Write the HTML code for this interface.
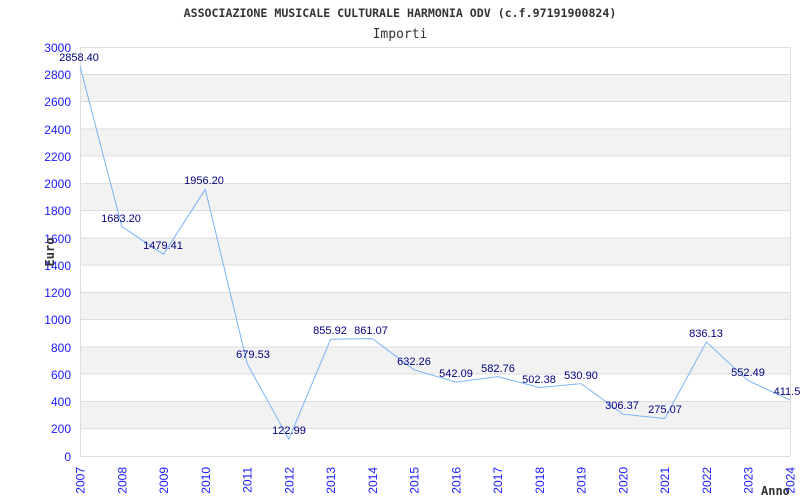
<!DOCTYPE html>
<html><head><meta charset="utf-8"><style>html,body{margin:0;padding:0;background:#fff}svg{display:block}</style></head>
<body>
<svg width="800" height="500" xmlns="http://www.w3.org/2000/svg">
<rect width="800" height="500" fill="#fff"/>
<text x="400" y="17" text-anchor="middle" font-family="DejaVu Sans Mono, Liberation Mono, monospace" font-size="11.6" font-weight="bold" fill="#333">ASSOCIAZIONE MUSICALE CULTURALE HARMONIA ODV (c.f.97191900824)</text>
<text x="400" y="38" text-anchor="middle" font-family="DejaVu Sans Mono, Liberation Mono, monospace" font-size="13" fill="#333">Importi</text>
<g fill="#f2f2f2">
<rect x="80" y="74.3" width="710" height="27.3"/>
<rect x="80" y="128.8" width="710" height="27.3"/>
<rect x="80" y="183.3" width="710" height="27.3"/>
<rect x="80" y="237.9" width="710" height="27.3"/>
<rect x="80" y="292.4" width="710" height="27.3"/>
<rect x="80" y="346.9" width="710" height="27.3"/>
<rect x="80" y="401.5" width="710" height="27.3"/>
</g>
<g stroke="#ddd" stroke-width="1">
<line x1="80" y1="47.5" x2="790" y2="47.5"/>
<line x1="80" y1="74.5" x2="790" y2="74.5"/>
<line x1="80" y1="101.5" x2="790" y2="101.5"/>
<line x1="80" y1="129" x2="790" y2="129"/>
<line x1="80" y1="156" x2="790" y2="156"/>
<line x1="80" y1="183.5" x2="790" y2="183.5"/>
<line x1="80" y1="210.5" x2="790" y2="210.5"/>
<line x1="80" y1="238" x2="790" y2="238"/>
<line x1="80" y1="265" x2="790" y2="265"/>
<line x1="80" y1="292.5" x2="790" y2="292.5"/>
<line x1="80" y1="319.5" x2="790" y2="319.5"/>
<line x1="80" y1="347" x2="790" y2="347"/>
<line x1="80" y1="374" x2="790" y2="374"/>
<line x1="80" y1="401.5" x2="790" y2="401.5"/>
<line x1="80" y1="428.5" x2="790" y2="428.5"/>
<line x1="80.5" y1="47" x2="80.5" y2="456"/>
<line x1="790.5" y1="47" x2="790.5" y2="456"/>
<line x1="80" y1="456.5" x2="790" y2="456.5"/>
</g>
<g font-family="Liberation Sans, sans-serif" font-size="12" fill="#1a1aff" text-anchor="end">
<text x="71" y="52">3000</text><text x="71" y="79">2800</text><text x="71" y="106">2600</text><text x="71" y="134">2400</text><text x="71" y="161">2200</text><text x="71" y="188">2000</text><text x="71" y="215">1800</text><text x="71" y="243">1600</text><text x="71" y="270">1400</text><text x="71" y="297">1200</text><text x="71" y="324">1000</text><text x="71" y="352">800</text><text x="71" y="379">600</text><text x="71" y="406">400</text><text x="71" y="433">200</text><text x="71" y="461">0</text>
</g>
<g font-family="Liberation Sans, sans-serif" font-size="12" fill="#1a1aff" text-anchor="end">
<text transform="translate(84.5,467) rotate(-90)">2007</text>
<text transform="translate(126.3,467) rotate(-90)">2008</text>
<text transform="translate(168,467) rotate(-90)">2009</text>
<text transform="translate(209.8,467) rotate(-90)">2010</text>
<text transform="translate(251.6,467) rotate(-90)">2011</text>
<text transform="translate(293.3,467) rotate(-90)">2012</text>
<text transform="translate(335.1,467) rotate(-90)">2013</text>
<text transform="translate(376.8,467) rotate(-90)">2014</text>
<text transform="translate(418.6,467) rotate(-90)">2015</text>
<text transform="translate(460.4,467) rotate(-90)">2016</text>
<text transform="translate(502.1,467) rotate(-90)">2017</text>
<text transform="translate(543.9,467) rotate(-90)">2018</text>
<text transform="translate(585.6,467) rotate(-90)">2019</text>
<text transform="translate(627.4,467) rotate(-90)">2020</text>
<text transform="translate(669.2,467) rotate(-90)">2021</text>
<text transform="translate(710.9,467) rotate(-90)">2022</text>
<text transform="translate(752.7,467) rotate(-90)">2023</text>
<text transform="translate(794.5,467) rotate(-90)">2024</text>
</g>
<text transform="translate(54,252) rotate(-90)" text-anchor="middle" font-family="DejaVu Sans Mono, monospace" font-size="12" font-weight="bold" fill="#333">Euro</text>
<text x="761" y="495" font-family="DejaVu Sans Mono, monospace" font-size="12" font-weight="bold" fill="#333">Anno</text>
<polyline fill="none" stroke="#7ab4f5" stroke-width="1" points="80,66.3 121.8,226.5 163.5,254.3 205.3,189.3 247.1,363.4 288.8,439.2 330.6,339.3 372.3,338.6 414.1,369.8 455.9,382.1 497.6,376.6 539.4,387.5 581.1,383.6 622.9,414.2 664.7,418.5 706.4,342 748.2,380.7 790,399.9"/>
<g font-family="Liberation Sans, sans-serif" font-size="11" fill="#000080" text-anchor="middle">
<text x="79" y="61">2858.40</text>
<text x="121" y="222">1683.20</text>
<text x="163" y="249">1479.41</text>
<text x="204" y="184">1956.20</text>
<text x="253" y="358">679.53</text>
<text x="289" y="434">122.99</text>
<text x="330" y="334">855.92</text>
<text x="371" y="334">861.07</text>
<text x="414" y="365">632.26</text>
<text x="456" y="377">542.09</text>
<text x="498" y="372">582.76</text>
<text x="539" y="383">502.38</text>
<text x="581" y="379">530.90</text>
<text x="622" y="409">306.37</text>
<text x="665" y="413">275.07</text>
<text x="706" y="337">836.13</text>
<text x="748" y="376">552.49</text>
<text x="787" y="395">411.5</text>
</g>
</svg>
</body></html>
